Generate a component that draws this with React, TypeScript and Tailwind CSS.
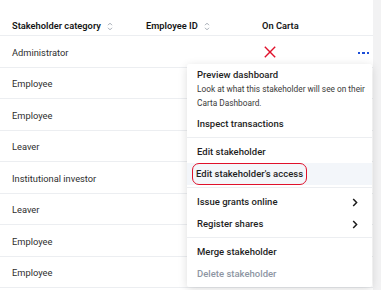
import React from "react"

const rows = [
  "Administrator",
  "Employee",
  "Employee",
  "Leaver",
  "Institutional investor",
  "Leaver",
  "Employee",
  "Employee",
]

function SortIcon() {
  return (
    <svg width="6" height="9" viewBox="0 0 6 9" className="ml-[6px]">
      <polyline points="1,3.2 3,1.2 5,3.2" fill="none" stroke="#9aa1ab" strokeWidth="0.9" />
      <polyline points="1,5.8 3,7.8 5,5.8" fill="none" stroke="#9aa1ab" strokeWidth="0.9" />
    </svg>
  )
}

function Chevron() {
  return (
    <svg width="6" height="9" viewBox="0 0 6 9">
      <polyline points="1.2,1 4.6,4.5 1.2,8" fill="none" stroke="#1c1c1c" strokeWidth="1.5" />
    </svg>
  )
}

function MenuItem({ label, chevron, muted }: { label: string; chevron?: boolean; muted?: boolean }) {
  return (
    <div className="h-[22px] px-[10px] flex items-center justify-between">
      <span className={muted ? "text-[#8e96a3]" : "text-[#1f1f1f]"}>{label}</span>
      {chevron && <span className="mr-[4px]"><Chevron /></span>}
    </div>
  )
}

export default function App() {
  return (
    <div
      className="relative w-[381px] h-[290px] overflow-hidden flex bg-[#f2f2f3]"
      style={{ fontFamily: "Roboto, 'Liberation Sans', sans-serif" }}
    >
      <div className="w-[373px] h-full bg-white">
        {/* header */}
        <div className="h-[36px] flex items-end pb-[2px] border-b border-[#eceef1] text-[9.3px] font-semibold text-[#161616]">
          <div className="w-[146px] pl-[12px] flex items-center">
            Stakeholder category
            <SortIcon />
          </div>
          <div className="w-[116px] flex items-center">
            Employee ID
            <SortIcon />
          </div>
          <div>On Carta</div>
        </div>

        {/* rows */}
        {rows.map((r, i) => (
          <div
            key={i}
            className="h-[31.5px] pt-[3px] flex items-center border-b border-[#eceef1] text-[9.3px] text-[#2e2e2e]"
          >
            <div className="w-[264px] pl-[12px]">{r}</div>
            {i === 0 && (
              <>
                <svg width="12" height="12" viewBox="0 0 12 12" className="shrink-0 -mt-[2px]">
                  <line x1="0.8" y1="0.8" x2="11.2" y2="11.2" stroke="#e0112b" strokeWidth="1.4" />
                  <line x1="11.2" y1="0.8" x2="0.8" y2="11.2" stroke="#e0112b" strokeWidth="1.4" />
                </svg>
                <div className="ml-auto mr-[4px] flex gap-[2px]">
                  <span className="w-[2.5px] h-[2.5px] bg-[#1d4fd8]" />
                  <span className="w-[2.5px] h-[2.5px] bg-[#1d4fd8]" />
                  <span className="w-[2.5px] h-[2.5px] bg-[#1d4fd8]" />
                </div>
              </>
            )}
          </div>
        ))}
      </div>

      {/* dropdown menu */}
      <div className="absolute left-[187px] top-[64px] w-[185px] bg-white rounded-[2px] shadow-[0_2px_10px_rgba(0,0,0,0.14)] text-[9.5px] font-medium">
        <div className="pt-[3px] pb-[2px]">
          <div className="pl-[10px] pr-[4px] pt-[1px] pb-[3px]">
            <div className="leading-[14px] text-[#1f1f1f]">Preview dashboard</div>
            <div className="leading-[14px] text-[8.3px] font-normal text-[#3a3a3a]">
              Look at what this stakeholder will see on their Carta Dashboard.
            </div>
          </div>
          <MenuItem label="Inspect transactions" />
        </div>
        <div className="border-t border-[#eceef1] pt-[3px] pb-[2px]">
          <MenuItem label="Edit stakeholder" />
          <div className="h-[22px] px-[10px] flex items-center bg-[#f3f6fa]">
            <span className="-ml-[5px] h-[22px] flex items-center px-[3px] border-[1.5px] border-[#e0112b] rounded-[7px] text-[#1f1f1f]">
              Edit stakeholder's access
            </span>
          </div>
        </div>
        <div className="border-t border-[#eceef1] pt-[3px] pb-[2px]">
          <MenuItem label="Issue grants online" chevron />
          <MenuItem label="Register shares" chevron />
        </div>
        <div className="border-t border-[#eceef1] pt-[3px] pb-[2px]">
          <MenuItem label="Merge stakeholder" />
          <MenuItem label="Delete stakeholder" muted />
        </div>
      </div>
    </div>
  )
}
